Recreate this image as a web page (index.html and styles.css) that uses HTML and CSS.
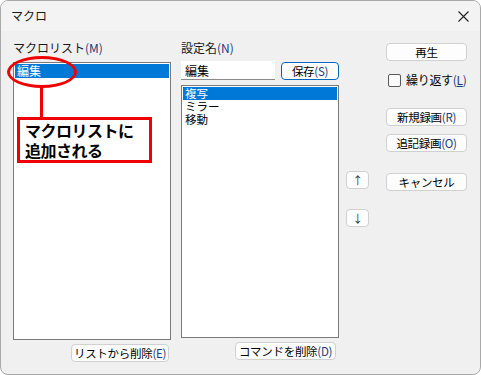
FILE: index.html
```html
<!DOCTYPE html>
<html lang="ja">
<head>
    <meta charset="UTF-8">
    <title>マクロ</title>
    <link rel="stylesheet" href="styles.css">
</head>
<body>
    <div class="window">
        <div class="titlebar">
            <span class="title">マクロ</span>
            <svg class="close" width="11" height="11" viewBox="0 0 11 11">
                <path d="M0.5 0.5 L10.5 10.5 M10.5 0.5 L0.5 10.5" stroke="#222" stroke-width="1.1" fill="none"/>
            </svg>
        </div>
        <div class="content">
            <!-- macro list -->
            <div class="col col-macro">
                <div class="label">マクロリスト<span class="acc">(M)</span></div>
                <div class="listbox macro-list">
                    <div class="item selected">編集</div>
                </div>
                <button class="btn btn-bottom btn-remove-list">リストから削除<span class="acc">(E)</span></button>
            </div>

            <!-- command list -->
            <div class="col col-command">
                <div class="label">設定名<span class="acc">(N)</span></div>
                <div class="name-row">
                    <div class="textbox">編集</div>
                    <button class="btn btn-save">保存<span class="acc">(S)</span></button>
                </div>
                <div class="listbox command-list">
                    <div class="item selected">複写</div>
                    <div class="item">ミラー</div>
                    <div class="item">移動</div>
                </div>
                <button class="btn btn-bottom btn-remove-cmd">コマンドを削除<span class="acc">(D)</span></button>
            </div>

            <!-- move up / down -->
            <div class="col col-arrows">
                <button class="btn btn-arrow btn-up">↑</button>
                <button class="btn btn-arrow btn-down">↓</button>
            </div>

            <!-- actions -->
            <div class="col col-actions">
                <button class="btn btn-action">再生</button>
                <label class="check-row">
                    <span class="checkbox"></span>
                    <span>繰り返す<span class="acc">(<u>L</u>)</span></span>
                </label>
                <button class="btn btn-action btn-new">新規録画<span class="acc">(R)</span></button>
                <button class="btn btn-action btn-append">追記録画<span class="acc">(O)</span></button>
                <button class="btn btn-action btn-cancel">キャンセル</button>
            </div>

            <!-- red annotation over the macro list -->
            <div class="note-ring"></div>
            <div class="note-line"></div>
            <div class="note-box">マクロリストに<br>追加される</div>
        </div>
    </div>
</body>
</html>
```

FILE: styles.css
```css
html, body {
    margin: 0;
    padding: 0;
    background: #ffffff;
}

body {
    font-family: "Noto Sans CJK JP", "Noto Sans", sans-serif;
    font-size: 12px;
    color: #000;
}

.window {
    width: 479px;
    height: 373px;
    border: 1px solid #a9a9a9;
    border-radius: 8px;
    background: #f0f0f0;
    overflow: hidden;
    display: flex;
    flex-direction: column;
}

.titlebar {
    height: 30px;
    background: #f3f3f3;
    display: flex;
    align-items: center;
    justify-content: space-between;
    padding: 0 10px 0 10px;
    flex-shrink: 0;
}

.title {
    font-size: 12px;
    line-height: 14px;
    color: #1a1a1a;
}

.close {
    margin-right: 1px;
}

.content {
    position: relative;
    flex: 1;
    display: flex;
    align-items: flex-start;
    padding: 10px 0 0 12px;
}

.col {
    display: flex;
    flex-direction: column;
}

.label {
    line-height: 14px;
    height: 14px;
    color: #1a1a1a;
    white-space: nowrap;
}

.acc {
    color: #1f3a78;
}

.btn {
    font-family: inherit;
    font-size: 11.5px;
    line-height: 14px;
    color: #000;
    background: #fdfdfd;
    border: 1px solid #d0d0d0;
    border-radius: 4px;
    padding: 0;
    margin: 0;
    height: 18px;
    white-space: nowrap;
    letter-spacing: -0.3px;
    overflow: hidden;
}

/* left column */
.col-macro {
    width: 158px;
}

.listbox {
    background: #fff;
    border: 1px solid #7a7a7a;
    box-sizing: border-box;
    padding: 1px;
}

.macro-list {
    margin-top: 7px;
    height: 278px;
}

.item {
    height: 13px;
    line-height: 13px;
    font-size: 11.5px;
    padding-left: 2px;
    white-space: nowrap;
}

.macro-list .item {
    height: 14px;
    line-height: 14px;
    font-size: 12px;
}

.item.selected {
    background: #0078d7;
    color: #fff;
}

.btn-bottom {
    align-self: flex-end;
    margin-top: 4px;
}

.btn-remove-list {
    width: 98px;
    margin-right: 2px;
}

/* middle column */
.col-command {
    width: 158px;
    margin-left: 10px;
}

.name-row {
    display: flex;
    align-items: center;
    gap: 6px;
    margin-top: 6px;
    height: 19px;
}

.textbox {
    width: 94px;
    height: 19px;
    line-height: 19px;
    background: #fff;
    border-bottom: 1px solid #8a8a8a;
    padding-left: 4px;
    box-sizing: border-box;
}

.btn-save {
    width: 58px;
    border: 1px solid #0067c0;
    box-shadow: inset 0 0 0 1px #ffffff;
    margin-top: 1px;
}

.command-list {
    margin-top: 5px;
    height: 253px;
    padding-top: 1px;
}

.btn-remove-cmd {
    width: 101px;
    margin-right: 3px;
}

/* arrow column */
.col-arrows {
    width: 23px;
    margin-left: 7px;
}

.btn-arrow {
    width: 23px;
    height: 18px;
    font-size: 11px;
    line-height: 12px;
    color: #333;
}

.btn-up {
    margin-top: 130px;
}

.btn-down {
    margin-top: 20px;
}

/* action column */
.col-actions {
    width: 81px;
    margin-left: 17px;
}

.btn-action {
    width: 81px;
}

.col-actions .btn-action:first-child {
    margin-top: 2px;
}

.check-row {
    display: flex;
    align-items: center;
    gap: 5px;
    margin-top: 12px;
    margin-left: 2px;
    height: 14px;
    line-height: 14px;
    white-space: nowrap;
    letter-spacing: -0.3px;
}

.checkbox {
    flex-shrink: 0;
    width: 11px;
    height: 11px;
    border: 1px solid #5a5a5a;
    border-radius: 2px;
    background: #fbfbfb;
}

.btn-new {
    margin-top: 21px;
}

.btn-append {
    margin-top: 8px;
}

.btn-cancel {
    margin-top: 21px;
}

/* annotation */
.note-ring {
    position: absolute;
    left: 6px;
    top: 25px;
    width: 64px;
    height: 26px;
    border: 3px solid #f00000;
    border-radius: 50%;
}

.note-line {
    position: absolute;
    left: 39px;
    top: 56px;
    width: 3px;
    height: 30px;
    background: #f00000;
}

.note-box {
    position: absolute;
    left: 16px;
    top: 86px;
    width: 124px;
    height: 40px;
    border: 3px solid #f00000;
    background: #fff;
    font-weight: bold;
    font-size: 16px;
    line-height: 20px;
    padding-left: 5px;
    box-sizing: content-box;
    letter-spacing: -0.5px;
}
```
